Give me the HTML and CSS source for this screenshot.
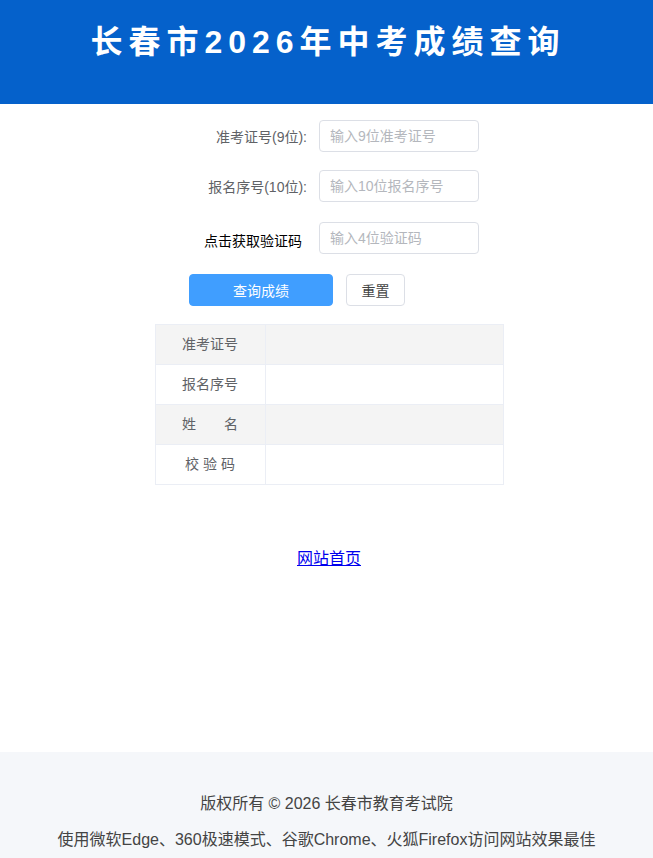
FILE: index.html
```html
<!DOCTYPE html>
<html lang="zh-CN">
  <head>
    <meta charset="UTF-8" />
    <title>长春市2026年中考成绩查询</title>
    <link rel="stylesheet" href="styles.css">
  </head>
  <body>
    <header class="top">
      <h1>长春市2026年中考成绩查询</h1>
    </header>

    <main class="content">
      <form class="query-form">
        <label class="field-label" for="zkzh">准考证号(9位):</label>
        <input class="field" type="text" id="zkzh" placeholder="输入9位准考证号" />

        <label class="field-label" for="bmxh">报名序号(10位):</label>
        <input class="field" type="text" id="bmxh" placeholder="输入10位报名序号" />

        <span class="field-label code-link">点击获取验证码</span>
        <input class="field" type="text" id="yzm" placeholder="输入4位验证码" />

        <div class="actions">
          <button type="button" class="btn btn-primary">查询成绩</button>
          <button type="reset" class="btn btn-plain">重置</button>
        </div>
      </form>

      <table class="result">
        <tr class="shade">
          <th>准考证号</th>
          <td></td>
        </tr>
        <tr>
          <th>报名序号</th>
          <td></td>
        </tr>
        <tr class="shade">
          <th>姓&emsp;&emsp;名</th>
          <td></td>
        </tr>
        <tr>
          <th>校 验 码</th>
          <td></td>
        </tr>
      </table>

      <p class="home"><a href="#">网站首页</a></p>
    </main>

    <footer class="bottom">
      <p>版权所有 © 2026 长春市教育考试院</p>
      <p>使用微软Edge、360极速模式、谷歌Chrome、火狐Firefox访问网站效果最佳</p>
    </footer>
  </body>
</html>
```

FILE: styles.css
```css
body {
  margin: 0;
  font-family: "Liberation Sans", "Noto Sans CJK SC", sans-serif;
  font-size: 14px;
  color: #606266;
  background: #fff;
}
.top {
  height: 104px;
  background: #0561cb;
  box-sizing: border-box;
  padding-top: 20px;
}
.top h1 {
  margin: 0;
  padding-left: 3px;
  text-align: center;
  color: #fff;
  font-size: 32px;
  line-height: 44px;
  letter-spacing: 6px;
  font-weight: bold;
}
.content {
  min-height: 648px;
  box-sizing: border-box;
  padding-top: 16px;
}
.query-form {
  width: 305px;
  margin: 0 auto;
  display: grid;
  grid-template-columns: 133px 160px;
  column-gap: 12px;
  row-gap: 18px;
  align-items: center;
}
.field-label {
  text-align: right;
  font-size: 14px;
  color: #606266;
}
.code-link {
  color: #000;
  padding-right: 5px;
  margin-top: 6px;
}
.field {
  box-sizing: border-box;
  width: 160px;
  height: 32px;
  padding: 0 10px;
  border: 1px solid #dcdfe6;
  border-radius: 4px;
  font-family: inherit;
  font-size: 14px;
  color: #606266;
  outline: none;
}
.field::placeholder {
  color: #b4b7bd;
}
#yzm {
  margin-top: 2px;
}
.actions {
  grid-column: 1 / 3;
  display: flex;
  gap: 13px;
  padding-left: 15px;
  margin-top: 2px;
}
.btn {
  height: 32px;
  border-radius: 4px;
  font-family: inherit;
  font-size: 14px;
  cursor: pointer;
}
.btn-primary {
  width: 144px;
  background: #409eff;
  border: 1px solid #409eff;
  color: #fff;
}
.btn-plain {
  width: 59px;
  background: #fff;
  border: 1px solid #dcdfe6;
  color: #444;
}
.result {
  width: 349px;
  margin: 18px 0 0 calc(50% - 172px);
  border-collapse: collapse;
}
.result th,
.result td {
  height: 40px;
  padding: 0 0 4px;
  border: 1px solid #ebeef5;
  box-sizing: border-box;
}
.result th {
  width: 110px;
  font-weight: normal;
  font-size: 14px;
  color: #606266;
}
.result .shade {
  background: #f4f4f4;
}
.home {
  margin: 60px 0 0;
  padding-left: 5px;
  text-align: center;
  font-size: 16px;
}
.home a {
  color: #0000ee;
}
.bottom {
  background: #f5f7fa;
  padding: 34px 0 8px;
  text-align: center;
  font-size: 16px;
  color: #444;
}
.bottom p {
  margin: 0;
  line-height: 36px;
}
```
